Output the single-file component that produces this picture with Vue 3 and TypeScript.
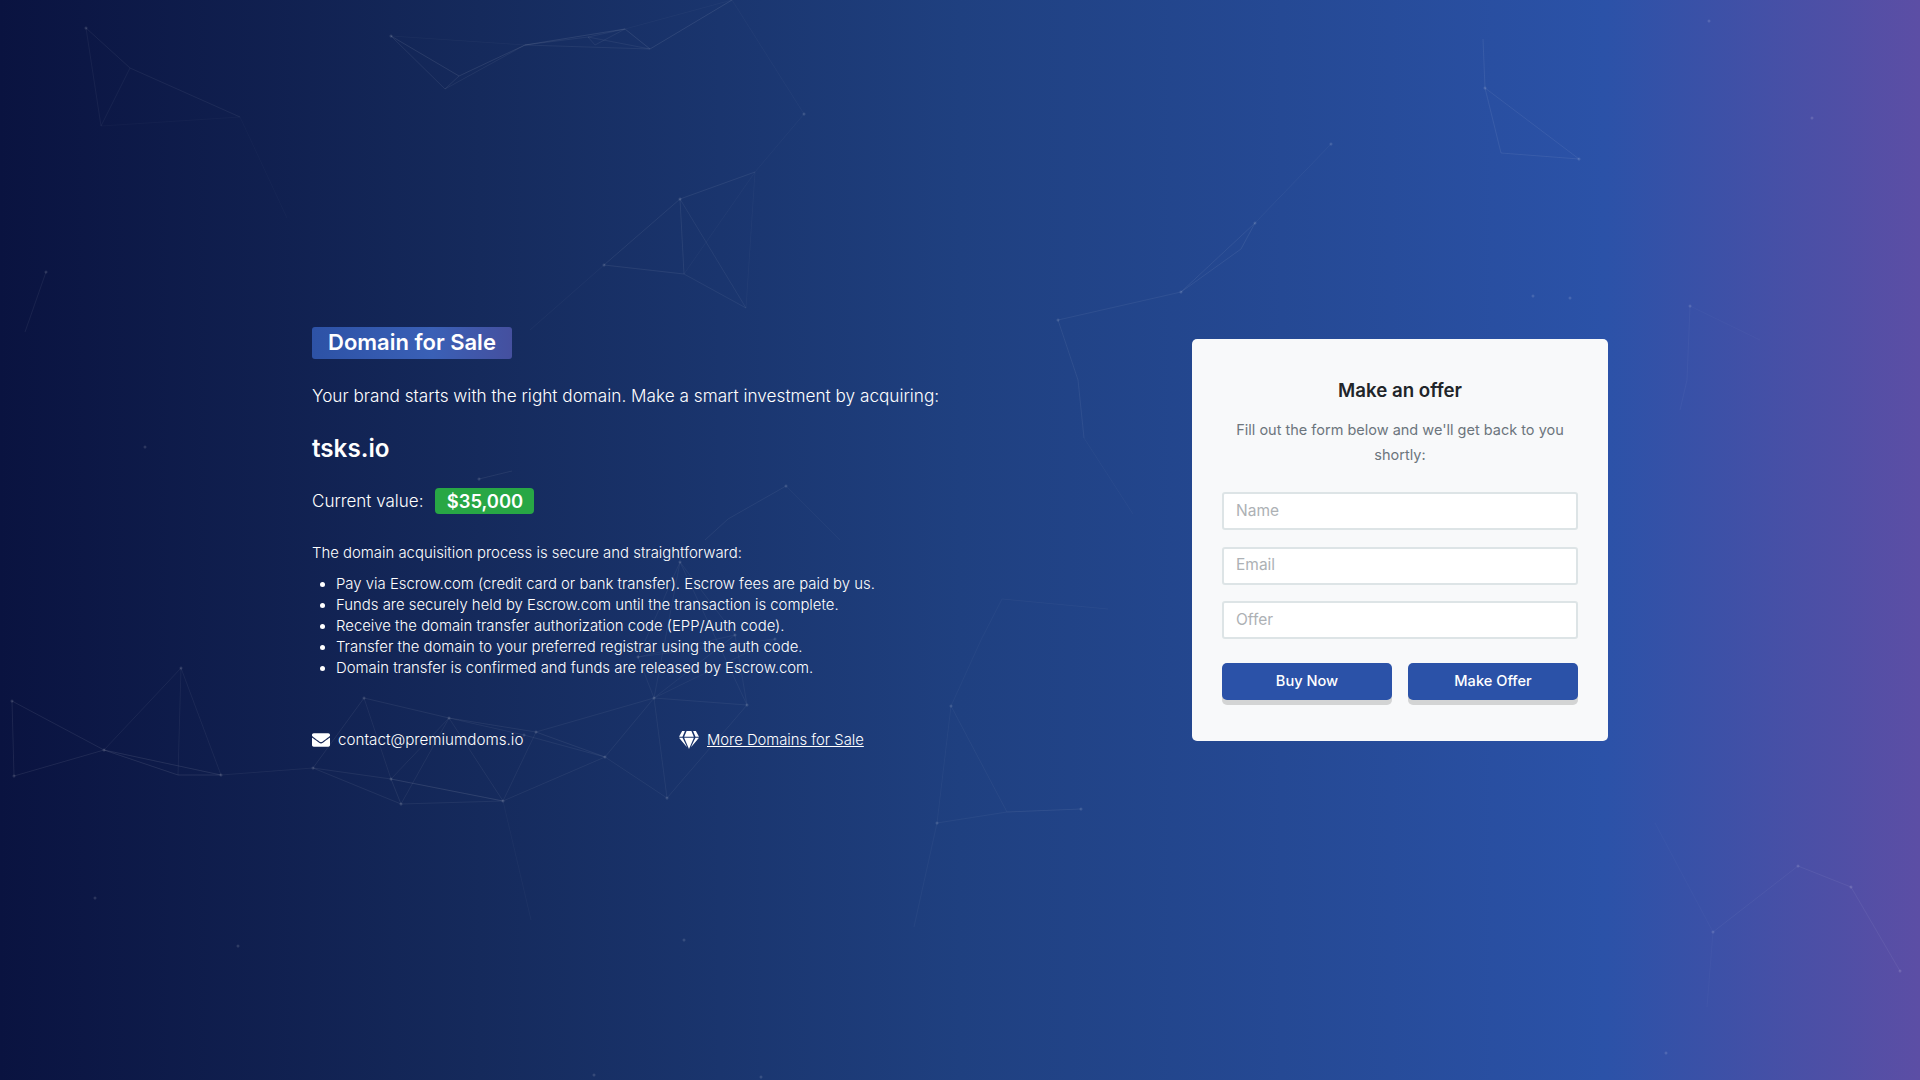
<script setup lang="ts">
type P = [number, number];
type Seg = { a: P; b: P; o: number };

const seg = (o: number, ...pts: P[]): Seg[] =>
  pts.slice(1).map((p, i) => ({ a: pts[i], b: p, o: o * 0.6 }));

const segments: Seg[] = [
  ...seg(0.1, [86, 28], [130, 68], [240, 117]),
  ...seg(0.08, [86, 28], [101, 126], [130, 68]),
  ...seg(0.04, [101, 126], [240, 117], [287, 218]),
  ...seg(0.1, [46, 272], [25, 332]),
  ...seg(0.15, [391, 36], [459, 76], [525, 45], [625, 29], [650, 49], [732, 0]),
  ...seg(0.12, [391, 36], [445, 89], [459, 76]),
  ...seg(0.1, [445, 89], [525, 45], [650, 49], [588, 37], [595, 45], [625, 29], [588, 37], [525, 45]),
  ...seg(0.05, [391, 36], [525, 45]),
  ...seg(0.05, [625, 29], [732, 0], [804, 114], [755, 172]),
  ...seg(0.12, [755, 172], [680, 199], [684, 274], [604, 265], [680, 199]),
  ...seg(0.1, [684, 274], [746, 308], [680, 199]),
  ...seg(0.05, [746, 308], [755, 172], [684, 274]),
  ...seg(0.05, [604, 265], [530, 330]),
  ...seg(0.12, [479, 479], [512, 471]),
  ...seg(0.1, [786, 486], [728, 519], [705, 540]),
  ...seg(0.05, [786, 486], [840, 540]),
  ...seg(0.13, [12, 701], [104, 750], [14, 776], [12, 701]),
  ...seg(0.16, [104, 750], [178, 775], [221, 775], [104, 750]),
  ...seg(0.09, [104, 750], [181, 668], [178, 775]),
  ...seg(0.09, [181, 668], [221, 775], [313, 768]),
  ...seg(0.11, [313, 768], [391, 779], [401, 804], [313, 768], [364, 698], [449, 718], [536, 732], [605, 757]),
  ...seg(0.1, [449, 718], [524, 735], [605, 757], [503, 801], [401, 804], [449, 718], [503, 801], [391, 779], [449, 718]),
  ...seg(0.09, [364, 698], [391, 779], [503, 801], [536, 732], [654, 698], [605, 757], [667, 798], [654, 698], [747, 705], [667, 798]),
  ...seg(0.05, [503, 801], [531, 920]),
  ...seg(0.08, [654, 698], [638, 657], [735, 635], [747, 705], [680, 562], [654, 698], [775, 639], [638, 657], [680, 562], [735, 635], [654, 698]),
  ...seg(0.12, [1483, 39], [1485, 88], [1501, 153], [1579, 159], [1485, 88]),
  ...seg(0.07, [1331, 144], [1255, 223]),
  ...seg(0.12, [1255, 223], [1241, 249], [1181, 292], [1255, 223]),
  ...seg(0.1, [1181, 292], [1058, 320], [1078, 380], [1084, 438]),
  ...seg(0.05, [1084, 438], [1133, 514]),
  ...seg(0.06, [1002, 599], [1108, 609]),
  ...seg(0.05, [1002, 599], [981, 640], [951, 706]),
  ...seg(0.06, [951, 706], [937, 823], [914, 927]),
  ...seg(0.07, [951, 706], [1007, 812], [937, 823]),
  ...seg(0.12, [1007, 812], [1081, 809]),
  ...seg(0.1, [1798, 866], [1851, 887], [1900, 971]),
  ...seg(0.08, [1798, 866], [1713, 932]),
  ...seg(0.04, [1713, 932], [1655, 823]),
  ...seg(0.04, [1713, 932], [1707, 1007]),
  ...seg(0.06, [1690, 306], [1687, 380], [1680, 410]),
  ...seg(0.04, [1690, 306], [1760, 340]),
];

const nodes: P[] = [
  [86, 28], [46, 272], [391, 36], [804, 114], [680, 199], [604, 265], [479, 479], [786, 486],
  [12, 701], [14, 776], [104, 750], [181, 668], [221, 775], [313, 768], [364, 698], [449, 718],
  [536, 732], [524, 735], [391, 779], [401, 804], [503, 801], [605, 757], [654, 698], [747, 705],
  [667, 798], [680, 562], [735, 635], [775, 639], [638, 657], [95, 898], [238, 946], [684, 940],
  [594, 1075], [761, 1077], [1485, 88], [1579, 159], [1709, 21], [1812, 118], [1533, 296],
  [1331, 144], [1255, 223], [1181, 292], [1058, 320], [1690, 306], [951, 706], [1081, 809],
  [937, 823], [1798, 866], [1851, 887], [1900, 971], [1713, 932], [1666, 1053],
  [145, 447], [1570, 298],
];

const steps: string[] = [
  "Pay via Escrow.com (credit card or bank transfer). Escrow fees are paid by us.",
  "Funds are securely held by Escrow.com until the transaction is complete.",
  "Receive the domain transfer authorization code (EPP/Auth code).",
  "Transfer the domain to your preferred registrar using the auth code.",
  "Domain transfer is confirmed and funds are released by Escrow.com.",
];
</script>

<template>
  <div class="page">
    <svg class="network" viewBox="0 0 1920 1080" aria-hidden="true">
      <line
        v-for="(s, i) in segments"
        :key="'l' + i"
        :x1="s.a[0]"
        :y1="s.a[1]"
        :x2="s.b[0]"
        :y2="s.b[1]"
        stroke="#fff"
        stroke-width="1"
        :stroke-opacity="s.o"
      />
      <circle
        v-for="(n, i) in nodes"
        :key="'c' + i"
        :cx="n[0]"
        :cy="n[1]"
        r="1.5"
        fill="#fff"
        fill-opacity="0.13"
      />
    </svg>

    <main class="container">
      <section class="intro">
        <h1 class="badge">Domain for Sale</h1>
        <p class="lead">Your brand starts with the right domain. Make a smart investment by acquiring:</p>
        <h2 class="domain">tsks.io</h2>
        <div class="value">
          <span class="value-label">Current value:</span>
          <span class="price">$35,000</span>
        </div>
        <p class="process">The domain acquisition process is secure and straightforward:</p>
        <ul class="steps">
          <li v-for="step in steps" :key="step">{{ step }}</li>
        </ul>
        <div class="contacts">
          <div class="contact">
            <svg class="mail" viewBox="0 0 512 512" aria-hidden="true">
              <path
                fill="#fff"
                d="M502.3 190.8c3.9-3.1 9.7-.2 9.7 4.7V400c0 26.5-21.5 48-48 48H48c-26.5 0-48-21.5-48-48V195.6c0-5 5.7-7.8 9.7-4.7 22.4 17.4 52.1 39.5 154.1 113.6 21.1 15.4 56.7 47.8 92.2 47.6 35.7.3 72-32.8 92.3-47.6 102-74.1 131.6-96.3 154-113.7zM256 320c23.2.4 56.6-29.2 73.4-41.4 132.7-96.3 142.8-104.7 173.4-128.7 5.8-4.5 9.2-11.5 9.2-18.9v-19c0-26.5-21.5-48-48-48H48C21.5 64 0 85.5 0 112v19c0 7.4 3.4 14.3 9.2 18.9 30.6 23.9 40.7 32.4 173.4 128.7 16.8 12.2 50.2 41.8 73.4 41.4z"
              />
            </svg>
            <span class="contact-text">contact@premiumdoms.io</span>
          </div>
          <div class="contact">
            <svg class="gem" viewBox="0 0 576 512" aria-hidden="true">
              <path
                fill="#fff"
                d="M485.5 0L576 160H474.9L405.7 0h79.8zm-128 0l69.2 160H149.3L218.5 0h139zm-267 0h79.8l-69.2 160H0L90.5 0zM0 192h100.7l123 251.7c1.5 3.1-2.7 5.9-5 3.3L0 192zm148.2 0h279.6l-137 318.2c-1 2.4-4.5 2.4-5.5 0L148.2 192zm204.1 251.7l123-251.7H576L357.3 446.9c-2.3 2.7-6.5-.1-5-3.2z"
              />
            </svg>
            <a class="more" href="#">More Domains for Sale</a>
          </div>
        </div>
      </section>

      <form class="card" @submit.prevent>
        <h3 class="card-title">Make an offer</h3>
        <p class="card-text">Fill out the form below and we'll get back to you shortly:</p>
        <div class="fields">
          <input class="field" type="text" placeholder="Name" />
          <input class="field" type="text" placeholder="Email" />
          <input class="field" type="text" placeholder="Offer" />
        </div>
        <div class="actions">
          <button class="btn" type="button">Buy Now</button>
          <button class="btn" type="button">Make Offer</button>
        </div>
      </form>
    </main>
  </div>
</template>

<style>
html,
body {
  margin: 0;
  padding: 0;
}
</style>

<style scoped>
.page {
  position: relative;
  height: 100vh;
  min-height: 1080px;
  overflow: hidden;
  display: flex;
  align-items: center;
  justify-content: center;
  background: linear-gradient(90deg, #0a1340 0%, #152a5c 25%, #1f4080 50%, #2b52a8 83.5%, #5c4ea5 100%);
  font-family: Inter, "Noto Sans", sans-serif;
  color: #fff;
}

.network {
  position: absolute;
  inset: 0;
  width: 1920px;
  height: 1080px;
  pointer-events: none;
}

.container {
  position: relative;
  width: 1296px;
  display: flex;
  align-items: center;
  justify-content: space-between;
}

.intro {
  width: 700px;
  margin-bottom: 3px;
}

.badge {
  display: inline-block;
  margin: 0;
  padding: 0 16px 1px;
  box-sizing: border-box;
  height: 32px;
  line-height: 31px;
  font-size: 22px;
  font-weight: 600;
  border-radius: 3px;
  background: linear-gradient(90deg, #2d52a6 0%, #3a60b6 60%, #45509f 100%);
  vertical-align: top;
}

.lead {
  margin: 23px 0 0;
  font-size: 17.2px;
  line-height: 27px;
  font-weight: 300;
}

.domain {
  margin: 22px 0 0;
  font-size: 24.2px;
  line-height: 36px;
  font-weight: 600;
}

.value {
  margin-top: 21px;
  display: flex;
  align-items: center;
  gap: 12px;
}

.value-label {
  font-size: 17px;
  line-height: 26px;
  font-weight: 300;
}

.price {
  width: 99px;
  height: 26px;
  line-height: 26px;
  text-align: center;
  border-radius: 4px;
  background: #28a745;
  font-size: 18.4px;
  font-weight: 600;
}

.process {
  margin: 28px 0 0;
  font-size: 14.9px;
  line-height: 22px;
  font-weight: 300;
}

.steps {
  margin: 10.5px 0 0;
  padding: 0 0 0 24px;
  font-size: 14.9px;
  line-height: 21px;
  font-weight: 300;
}

.contacts {
  margin-top: 49.5px;
  display: grid;
  grid-template-columns: 366px auto;
}

.contact {
  display: flex;
  align-items: center;
  height: 22px;
  font-size: 14.8px;
  font-weight: 300;
}

.contact-text {
  font-size: 15.2px;
}

.mail {
  width: 18px;
  height: 18px;
  margin-right: 8px;
}

.gem {
  width: 20px;
  height: 18px;
  margin-right: 8px;
  margin-left: 1px;
}

.more {
  color: #fff;
  text-decoration: underline;
}

.card {
  box-sizing: border-box;
  width: 416px;
  height: 402px;
  padding: 37px 30px 41px;
  border-radius: 5px;
  background: #f8f9fa;
  text-align: center;
  color: #212529;
}

.card-title {
  margin: 0;
  font-size: 18.7px;
  line-height: 30px;
  font-weight: 600;
}

.card-text {
  margin: 11px 0 0;
  font-size: 14.5px;
  line-height: 25px;
  color: #6c757d;
}

.fields {
  margin-top: 25px;
  display: flex;
  flex-direction: column;
  gap: 16.5px;
}

.field {
  box-sizing: border-box;
  width: 100%;
  height: 38px;
  padding: 0 12px 2px;
  border: 2px solid #dde4e6;
  border-radius: 3px;
  background: #fff;
  font-family: inherit;
  font-size: 15.5px;
  outline: none;
}

.field::placeholder {
  color: #adb1b5;
  opacity: 1;
}

.actions {
  margin-top: 24px;
  display: flex;
  gap: 16px;
}

.btn {
  flex: 1;
  height: 37px;
  padding: 0 0 1px;
  border: 0;
  border-radius: 5px;
  background: #2b52a8;
  box-shadow: 0 5px 0 rgba(0, 0, 0, 0.15);
  color: #fff;
  font-family: inherit;
  font-size: 14.6px;
  font-weight: 500;
}
</style>
